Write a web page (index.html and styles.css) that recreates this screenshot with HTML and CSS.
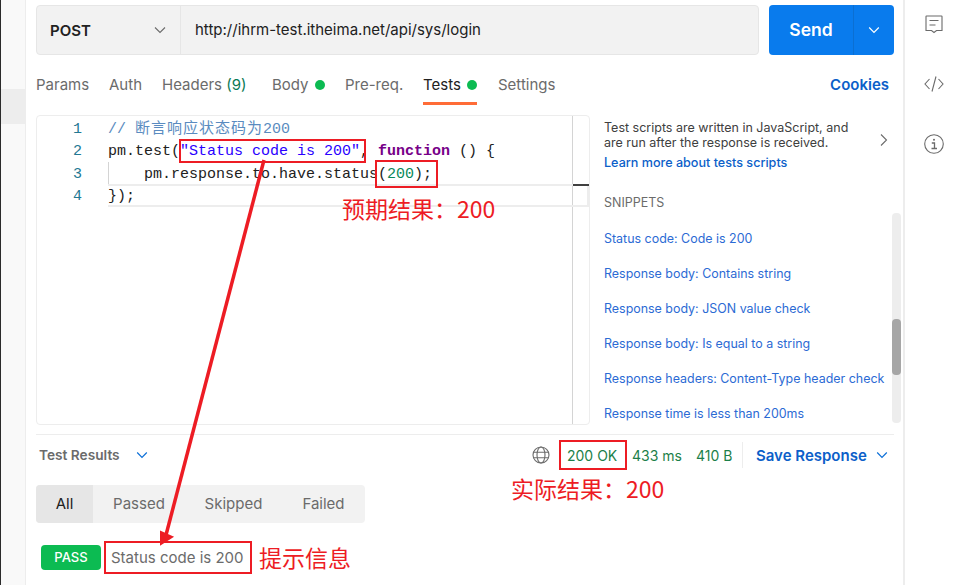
FILE: index.html
```html
<!DOCTYPE html>
<html lang="zh">
<head>
<meta charset="utf-8">
<title>Postman tests</title>
<link rel="stylesheet" href="styles.css">
</head>
<body>
<div class="app">
  <aside class="strip"><div class="strip-hi"></div></aside>
  <main class="main">
    <div class="urlrow">
      <div class="urlbar">
        <div class="method"><b>POST</b>
          <svg class="chev" width="14" height="14" viewBox="0 0 14 14"><path d="M2 4.500l5 5 5-5" fill="none" stroke="#6b6b6b" stroke-width="1.100"/></svg>
        </div>
        <div class="url">http://ihrm-test.itheima.net/api/sys/login</div>
      </div>
      <div class="send"><span class="send-label">Send</span><span class="send-more">
        <svg width="12" height="12" viewBox="0 0 12 12"><path d="M1.200 3.500L6 8.300l4.800-4.800" fill="none" stroke="#fff" stroke-width="1.200"/></svg></span></div>
    </div>
    <nav class="tabs">
      <span class="tab t1">Params</span>
      <span class="tab t2">Auth</span>
      <span class="tab t3">Headers <i class="n">(9)</i></span>
      <span class="tab t4">Body<i class="dot"></i></span>
      <span class="tab t5">Pre-req.</span>
      <span class="tab t6">Tests<i class="dot"></i></span>
      <span class="tab t7">Settings</span>
      <span class="cookies">Cookies</span>
    </nav>
    <section class="work">
      <div class="editor">
        <div class="code">
          <div class="cl"><span class="ln">1</span><span class="cm">// <span class="cjk">断言响应状态码为</span>200</span></div>
          <div class="cl"><span class="ln">2</span><span>pm.test(<span class="str">"Status code is 200"</span>, <span class="kw">function</span> () {</span></div>
          <div class="cl"><span class="ln">3</span><span class="ind">pm.response.to.have.status(<span class="num">200</span>);</span></div>
          <div class="cl"><span class="ln">4</span><span>});</span></div>
        </div>
        <div class="minimap"></div>
        <div class="guide"></div>
        <div class="curline"></div>
        <div class="tick"></div>
      </div>
      <div class="side">
        <div class="info">
          <div class="info-text">
            <p>Test scripts are written in JavaScript, and<br>are run after the response is received.</p>
            <a class="learn">Learn more about tests scripts</a>
          </div>
          <svg class="info-chev" width="10" height="14" viewBox="0 0 10 14"><path d="M2 1.500l5.500 5.500L2 12.500" fill="none" stroke="#6b6b6b" stroke-width="1.100"/></svg>
        </div>
        <div class="snip-title">SNIPPETS</div>
        <div class="snips">
          <div class="snip-list">
            <a>Status code: Code is 200</a>
            <a>Response body: Contains string</a>
            <a>Response body: JSON value check</a>
            <a>Response body: Is equal to a string</a>
            <a>Response headers: Content-Type header check</a>
            <a>Response time is less than 200ms</a>
          </div>
          <div class="scroll"><div class="thumb"></div></div>
        </div>
      </div>
    </section>
    <section class="results">
      <div class="res-head">
        <span class="res-title">Test Results</span>
        <svg class="res-chev" width="12" height="12" viewBox="0 0 12 12"><path d="M1.200 3.500L6 8.300l4.800-4.800" fill="none" stroke="#0c6fd8" stroke-width="1.200"/></svg>
        <svg class="globe" width="18" height="18" viewBox="0 0 18 18" fill="none" stroke="#6b6b6b" stroke-width="1.100"><circle cx="9" cy="9" r="8"/><ellipse cx="9" cy="9" rx="4" ry="8"/><path d="M1.500 6.300h15M1.500 11.700h15"/></svg>
        <span class="stat s1">200 OK</span>
        <span class="stat s2">433 ms</span>
        <span class="stat s3">410 B</span>
        <span class="vsep"></span>
        <span class="save">Save Response</span>
        <svg class="save-chev" width="12" height="12" viewBox="0 0 12 12"><path d="M1.200 3.500L6 8.300l4.800-4.800" fill="none" stroke="#0c6fd8" stroke-width="1.200"/></svg>
      </div>
      <div class="seg">
        <span class="seg-i">All</span>
        <span class="seg-i">Passed</span>
        <span class="seg-i">Skipped</span>
        <span class="seg-i">Failed</span>
      </div>
      <div class="pass-row">
        <span class="pass">PASS</span>
        <span class="pass-text">Status code is 200</span>
      </div>
    </section>
  </main>
  <aside class="rail">
    <svg width="20" height="20" viewBox="0 0 20 20" fill="none" stroke="#6b6b6b" stroke-width="1.100"><path d="M2.500 2h15a.5.5 0 0 1 .5.5V16.500H12.500L10 18.500 7.500 16.500H2V2.500A.5.5 0 0 1 2.500 2z"/><path d="M5.500 6.500h9M5.500 11h6"/></svg>
    <svg width="20" height="20" viewBox="0 0 20 20" fill="none" stroke="#6b6b6b" stroke-width="1.100"><path d="M5.500 5L1 10l4.500 5M14.500 5L19 10l-4.500 5M12 2.500L8 17.500"/></svg>
    <svg width="20" height="20" viewBox="0 0 20 20" fill="none" stroke="#6b6b6b" stroke-width="1.100"><circle cx="10" cy="10" r="9.300"/><circle cx="10" cy="5.800" r="1" fill="#6b6b6b" stroke="none"/><path d="M7.800 9h2.700v5.500M7.500 14.500h5.500" stroke-width="1.300"/></svg>
  </aside>
  <div class="mark m1"></div>
  <div class="mark m2"></div>
  <div class="mark m3"></div>
  <div class="mark m4"></div>
  <svg class="arrow" width="964" height="585" viewBox="0 0 964 585"><path d="M264 160L166 535" stroke="#ed1c24" stroke-width="3.500" fill="none"/><path d="M161 544L161 532L172 537z" fill="#ed1c24" stroke="#ed1c24" stroke-width="2"/></svg>
  <div class="note n1">预期结果：200</div>
  <div class="note n2">实际结果：200</div>
  <div class="note n3">提示信息</div>
</div>
</body>
</html>
```
FILE: styles.css
```css
* { box-sizing: border-box; }
html, body { margin: 0; padding: 0; background: #fff; }
body { width: 964px; height: 585px; overflow: hidden; font-family: Inter, "Noto Sans CJK SC", sans-serif; color: #6b6b6b; }
a { display: block; }
i { font-style: normal; }
.app { position: relative; display: flex; width: 964px; height: 585px; }

.strip { width: 26px; flex: none; background: #f9f9f9; border-left: 1px solid #2b2b2b; border-right: 1px solid #ededed; padding-top: 89px; }
.strip-hi { height: 35px; background: #ededed; }

.main { width: 877px; flex: none; padding: 5px 9px 0 10px; display: flex; flex-direction: column; }
.urlrow { display: flex; gap: 10px; height: 50px; }
.urlbar { width: 723px; display: flex; background: #f2f2f2; border: 1px solid #e6e6e6; border-radius: 4px; }
.method { width: 144px; padding: 0 13px; display: flex; align-items: center; justify-content: space-between; border-right: 1px solid #e6e6e6; font-size: 15px; color: #212121; }
.method b { font-weight: 600; }
.url { padding: 0 14px; line-height: 47px; font-size: 15px; color: #212121; }
.send { width: 125px; display: flex; background: #097bed; border-radius: 4px; color: #fff; }
.send-label { width: 85px; text-align: center; line-height: 49px; font-size: 17.500px; font-weight: 600; border-right: 1px solid #0b6fd2; }
.send-more { flex: 1; display: flex; align-items: center; justify-content: center; }

.tabs { display: flex; align-items: flex-start; height: 60px; padding-top: 21px; font-size: 15px; line-height: 18px; color: #6b6b6b; }
.tab { display: flex; align-items: center; white-space: pre; }
.t1 { width: 73px; }
.t2 { width: 53px; }
.t3 { width: 110px; }
.t4 { width: 73px; }
.t5 { width: 78px; }
.t6 { width: 54px; height: 29px; align-items: flex-start; color: #212121; border-bottom: 3px solid #ff6c37; }
.t6 .dot { margin-top: 4px; }
.t7 { margin-left: 21px; }
.n { color: #0a7a55; }
.dot { width: 10px; height: 10px; border-radius: 50%; background: #0cbb52; margin-left: 6px; }
.cookies { margin-left: auto; margin-right: 5px; font-weight: 600; color: #0c5fc9; }

.work { display: flex; height: 310px; }
.editor { width: 554px; flex: none; display: flex; border: 1px solid #ededed; border-radius: 4px; position: relative; }
.code { width: 535px; flex: none; padding-top: 3px; font: 15px/22.300px "Liberation Mono", "Noto Sans CJK SC", monospace; color: #212121; }
.cl { display: flex; white-space: pre; height: 22.300px; }
.ln { width: 71px; flex: none; padding-right: 26px; text-align: right; color: #237893; }
.cm { color: #5a8bc0; }
.cjk { letter-spacing: 1px; }
.str { color: #2a00ff; }
.kw { color: #770088; font-weight: 700; }
.num { color: #09885a; }
.ind { padding-left: 36px; }
.minimap { flex: 1; border-left: 1px solid #d4d4d4; }
.guide { position: absolute; left: 71px; top: 46px; width: 1px; height: 22px; background: #d4d4d4; }
.curline { position: absolute; left: 71px; right: 0; top: 68px; height: 23px; border: 2px solid #ededed; border-left: 0; }
.tick { position: absolute; left: 536px; right: 0; top: 68px; height: 2px; background: #404040; }

.side { flex: 1; padding: 5px 0 0 14px; position: relative; min-width: 0; }
.info { display: flex; justify-content: space-between; align-items: flex-start; padding-right: 5px; }
.info-text p { margin: 0; font-size: 12.500px; line-height: 15px; color: #404040; white-space: nowrap; }
.learn { font-size: 12.600px; font-weight: 500; color: #0c5fc9; line-height: 15px; margin-top: 5px; white-space: nowrap; }
.info-chev { margin-top: 13px; }
.snip-title { font-size: 12.500px; line-height: 15px; margin-top: 25px; color: #6b6b6b; }
.snips { position: absolute; left: 14px; right: -7px; top: 98px; bottom: 2px; display: flex; justify-content: space-between; }
.snip-list a { font-size: 12.450px; line-height: 15px; height: 35px; padding-top: 18px; color: #2b6ad4; white-space: nowrap; }
.scroll { width: 9px; background: #ededed; border-radius: 4px; flex: none; padding-top: 106px; }
.thumb { height: 56px; background: #a6a6a6; border-radius: 4px; }

.results { margin-top: 9px; border-top: 1px solid #ededed; }
.res-head { display: flex; align-items: center; height: 40px; padding-left: 3px; }
.res-title { font-weight: 600; font-size: 13.700px; color: #6b6b6b; width: 81px; white-space: nowrap; }
.res-chev { margin-left: 16px; }
.globe { margin-left: 384px; }
.stat { font-size: 14px; color: #1c7f4a; white-space: nowrap; }
.s1 { margin-left: 17px; width: 65px; }
.s2 { width: 64px; }
.s3 { width: 46px; }
.vsep { width: 1px; height: 26px; background: #ededed; }
.save { margin-left: 13px; font-size: 15px; font-weight: 600; color: #0c5fc9; white-space: nowrap; }
.save-chev { margin-left: 9px; }
.seg { display: flex; width: 329px; height: 38px; background: #f2f2f2; border-radius: 4px; margin-top: 10px; font-size: 15px; line-height: 38px; color: #6b6b6b; }
.seg-i { text-align: center; }
.seg-i:nth-child(1) { width: 57px; background: #e6e6e6; color: #212121; border-radius: 4px 0 0 4px; }
.seg-i:nth-child(2) { width: 92px; }
.seg-i:nth-child(3) { width: 97px; }
.seg-i:nth-child(4) { width: 83px; }
.pass-row { display: flex; align-items: center; margin-top: 22px; padding-left: 5px; gap: 10px; }
.pass { width: 60px; height: 25px; background: #0cbb52; border-radius: 4px; color: #fff; font-size: 13px; font-weight: 500; line-height: 25px; text-align: center; }
.pass-text { font-size: 15px; color: #6b6b6b; }

.rail { width: 61px; flex: none; border-left: 2px solid #ededed; padding: 14px 2px 0 0; display: flex; flex-direction: column; align-items: center; gap: 40px; }

.mark { position: absolute; border: 2px solid #ed1c24; }
.m1 { left: 179px; top: 139px; width: 187px; height: 24px; }
.m2 { left: 375px; top: 160px; width: 63px; height: 28px; }
.m3 { left: 559px; top: 440px; width: 68px; height: 30px; }
.m4 { left: 104px; top: 541px; width: 148px; height: 33px; }
.arrow { position: absolute; left: 0; top: 0; pointer-events: none; }
.note { position: absolute; color: #ed1c24; font: 23px/30px "Noto Sans CJK SC", sans-serif; white-space: nowrap; }
.n1 { left: 342px; top: 193px; }
.n2 { left: 511px; top: 473px; }
.n3 { left: 259px; top: 542px; }
```
